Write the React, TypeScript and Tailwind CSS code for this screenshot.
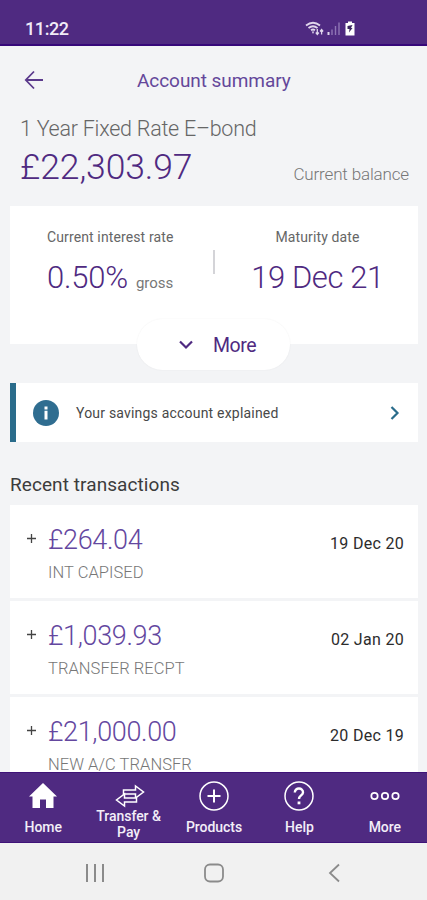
import React from "react";

const transactions = [
  { amount: "£264.04", label: "INT CAPISED", date: "19 Dec 20", track: "tracking-[-0.35px]" },
  { amount: "£1,039.93", label: "TRANSFER RECPT", date: "02 Jan 20", track: "tracking-[-0.35px]" },
  { amount: "£21,000.00", label: "NEW A/C TRANSFR", date: "20 Dec 19", track: "tracking-[-0.35px]" },
];

function StatusIcons() {
  return (
    <svg width="52" height="16" viewBox="0 0 52 16" fill="none" stroke="#e0d6ec">
      <path d="M1 4.5Q8-1 15 4.5M3.5 7Q8 3.5 12.5 7M6 9.2Q8 7.8 10 9.2" strokeWidth="1.8" />
      <path d="M6.7 10.5h2.6L8 13z" fill="#e0d6ec" stroke="none" />
      <path d="M12.3 8v5M10.8 11.5l1.5 2 1.5-2M16.6 13.5V8.5M15.1 10.5l1.5-2 1.5 2" strokeWidth="1.3" />
      <path d="M23.5 11v3" strokeWidth="2" />
      <path d="M27 8.5V14M30.5 5V14M34 1.5V14" stroke="#8f75b5" strokeWidth="1.4" />
      <path d="M40.5 2H43V.5h4V2h2.500v12.500h-9z" fill="#fff" stroke="none" />
      <path d="M42.500 5l5-1-1.500 3h1.500L44 11.500l.5-3.500h-2z" fill="#3b2560" stroke="none" />
    </svg>
  );
}

function HomeIcon() {
  return (
    <svg width="30" height="28" viewBox="0 0 30 28" fill="#fff">
      <path d="M15 1l14 13.500h-3.500V26H18v-8.500h-6V26H4.500V14.500H1z" />
    </svg>
  );
}

function TransferIcon() {
  return (
    <svg className="ml-[2px]" width="30" height="24" viewBox="0 0 30 24" fill="none" stroke="#fff" strokeWidth="1.5" strokeLinejoin="miter">
      <path d="M8.500 6H20.500V2L28.500 8l-8 6v-4H8.500z" />
      <path d="M21.500 14H9.500V10L1.500 16l8 6v-4h12z" fill="#4f2a81" />
    </svg>
  );
}

function Tab({ label, children }: { label: string; children: React.ReactNode }) {
  return (
    <div className="flex flex-1 flex-col items-center pl-px">
      <div className="flex h-[46px] items-center justify-center">{children}</div>
      <div className="text-[14px] font-medium leading-[16px] tracking-[-0.05px] text-[#f3eef8]">{label}</div>
    </div>
  );
}

export default function App() {
  return (
    <div className="flex h-[900px] w-[427px] flex-col overflow-hidden bg-[#f3f4f6] font-['Roboto',sans-serif] text-[#333]">
      <header className="flex h-[46px] shrink-0 items-center justify-between border-b-2 border-[#37087a] bg-[#4f2a81] pl-[25px] pr-[70px] pt-[14px] text-white">
        <span className="text-[18px] font-medium leading-[20px] tracking-[-0.4px] text-[#f1ebf7]">11:22</span>
        <StatusIcons />
      </header>

      <main className="flex min-h-0 flex-1 flex-col overflow-hidden">
        <div className="flex h-[68px] shrink-0 items-center pl-[24px]">
          <svg width="20" height="20" viewBox="0 0 20 20" fill="none" stroke="#5b3a8c" strokeWidth="1.8">
            <path d="M10 1.500L1.800 10l8.200 8.500M2 10h17" />
          </svg>
          <h1 className="ml-[93px] mt-[2px] whitespace-nowrap text-[19px] tracking-[-0.06px] text-[#64479a]">Account summary</h1>
        </div>

        <div className="h-[91px] shrink-0 pl-[20px] pr-[18px]">
          <div className="text-[21.500px] font-light leading-[30px] tracking-[-0.25px] text-[#666]">1 Year Fixed Rate E–bond</div>
          <div className="flex items-start justify-between">
            <span className="text-[35.500px] font-light leading-[46px] tracking-[-0.1px] text-[#4f2a81]">£22,303.97</span>
            <span className="pt-[20px] text-[17px] font-light leading-[20px] tracking-[-0.15px] text-[#777]">Current balance</span>
          </div>
        </div>

        <section className="relative ml-[10px] mr-[9px] mt-px flex h-[138px] shrink-0 bg-white">
          <div className="flex w-[203px] flex-col pl-[37px] pt-[21px]">
            <div className="text-[14px] leading-[20px] tracking-[0.12px] text-[#666]">Current interest rate</div>
            <div className="mt-[11px] flex items-baseline leading-[40px]">
              <span className="text-[31px] font-light tracking-[-0.2px] text-[#4f2a81]">0.50%</span>
              <span className="ml-[8px] text-[15px] text-[#777]">gross</span>
            </div>
          </div>
          <div className="mt-[44px] h-[24px] w-[2px] bg-[#d4d4d8]" />
          <div className="flex flex-1 flex-col items-center pl-[2px] pt-[21px]">
            <div className="text-[14px] leading-[20px] tracking-[0.12px] text-[#666]">Maturity date</div>
            <div className="mt-[11px] text-[31px] font-light leading-[40px] tracking-[-0.4px] text-[#4f2a81]">19 Dec 21</div>
          </div>
          <button className="absolute left-[127px] top-[113px] flex h-[51px] w-[153px] items-center rounded-full bg-white pl-[42px] text-[19.500px] text-[#4f2a81] shadow-[0_0_2px_rgba(0,0,0,0.06)]">
            <svg width="14" height="10" viewBox="0 0 14 10" fill="none" stroke="#4f2a81" strokeWidth="2.200">
              <path d="M1 1.500l6 6 6-6" />
            </svg>
            <span className="ml-[20px] mt-[2px] tracking-[-0.4px]">More</span>
          </button>
        </section>

        <section className="ml-[10px] mr-[9px] mt-[39px] flex h-[59px] shrink-0 items-center border-l-[6px] border-[#2a6c8b] bg-white pl-[17px] pr-[18px]">
          <svg width="26" height="26" viewBox="0 0 26 26">
            <circle cx="13" cy="13" r="13" fill="#2f6d90" />
            <path d="M11.500 6.500h3v3h-3zM11.500 10.800h3v8.700h-3z" fill="#fff" />
          </svg>
          <span className="ml-[17px] mt-[2px] flex-1 text-[14px] tracking-[0.2px] text-[#484848]">Your savings account explained</span>
          <svg width="10" height="14" viewBox="0 0 10 14" fill="none" stroke="#2a6c8b" strokeWidth="2.200">
            <path d="M1.500 1l6 6-6 6" />
          </svg>
        </section>

        <h2 className="ml-[10px] mt-[28px] h-[35px] shrink-0 text-[19px] leading-[29px] tracking-[0.08px] text-[#3c3c3c]">Recent transactions</h2>

        <ul className="ml-[10px] mr-[9px] flex shrink-0 flex-col gap-[3px]">
          {transactions.map((t) => (
            <li key={t.amount} className="flex h-[93px] bg-white pl-[16px] pr-[14px] pt-[18px]">
              <svg className="mt-[10px]" width="11" height="11" viewBox="0 0 11 11" stroke="#444" strokeWidth="1.300">
                <path d="M1 5.500h9M5.500 1v9" />
              </svg>
              <div className="ml-[11px] flex-1">
                <div className={`text-[27px] font-light leading-[34px] text-[#64479f] ${t.track}`}>{t.amount}</div>
                <div className="mt-[6px] text-[16.500px] font-light leading-[20px] tracking-[0.05px] text-[#777]">{t.label}</div>
              </div>
              <div className="mt-[10px] text-[16px] leading-[22px] tracking-[0.3px] text-[#2c2c2c]">{t.date}</div>
            </li>
          ))}
        </ul>
      </main>

      <nav className="flex h-[71px] shrink-0 border-y border-[#3f1378] bg-[#4f2a81] text-white">
        <Tab label="Home"><HomeIcon /></Tab>
        <div className="flex flex-1 flex-col items-center pl-px pt-[11px]">
          <TransferIcon />
          <div className="whitespace-nowrap text-center text-[14px] font-medium leading-[16px] tracking-[-0.05px] text-[#f3eef8]">Transfer &amp;<br />Pay</div>
        </div>
        <Tab label="Products">
          <svg width="30" height="30" viewBox="0 0 30 30" fill="none" stroke="#fff" strokeWidth="1.500">
            <circle cx="15" cy="15" r="14" />
            <path d="M15 8.500v13M8.500 15h13" strokeWidth="2" />
          </svg>
        </Tab>
        <Tab label="Help">
          <svg width="30" height="30" viewBox="0 0 30 30" fill="none" stroke="#fff" strokeWidth="1.500">
            <circle cx="15" cy="15" r="14" />
            <path d="M10.800 11.500C10.800 6 19.300 6.500 19 11.500C18.800 14.500 15 14.500 15 18" strokeWidth="2.400" />
            <path d="M15 20.500v2.800" strokeWidth="2.800" />
          </svg>
        </Tab>
        <Tab label="More">
          <svg width="30" height="10" viewBox="0 0 30 10" fill="none" stroke="#fff" strokeWidth="1.700">
            <circle cx="4.500" cy="5" r="3.200" />
            <circle cx="15" cy="5" r="3.200" />
            <circle cx="25.500" cy="5" r="3.200" />
          </svg>
        </Tab>
      </nav>

      <footer className="flex h-[57px] shrink-0 items-center bg-[#f1f1f1] pl-[85px] pt-[2px]">
        <svg width="20" height="20" viewBox="0 0 20 20" stroke="#8b8b8b" strokeWidth="2">
          <path d="M2 1v18M10 1v18M18 1v18" />
        </svg>
        <svg className="ml-[99px]" width="20" height="20" viewBox="0 0 20 20" fill="none" stroke="#8b8b8b" strokeWidth="1.800">
          <rect x="1" y="1.500" width="18" height="17" rx="5" />
        </svg>
        <svg className="ml-[104px]" width="13" height="20" viewBox="0 0 13 20" fill="none" stroke="#8b8b8b" strokeWidth="1.800">
          <path d="M11 1.500L2 10l9 8.500" />
        </svg>
      </footer>
    </div>
  );
}
